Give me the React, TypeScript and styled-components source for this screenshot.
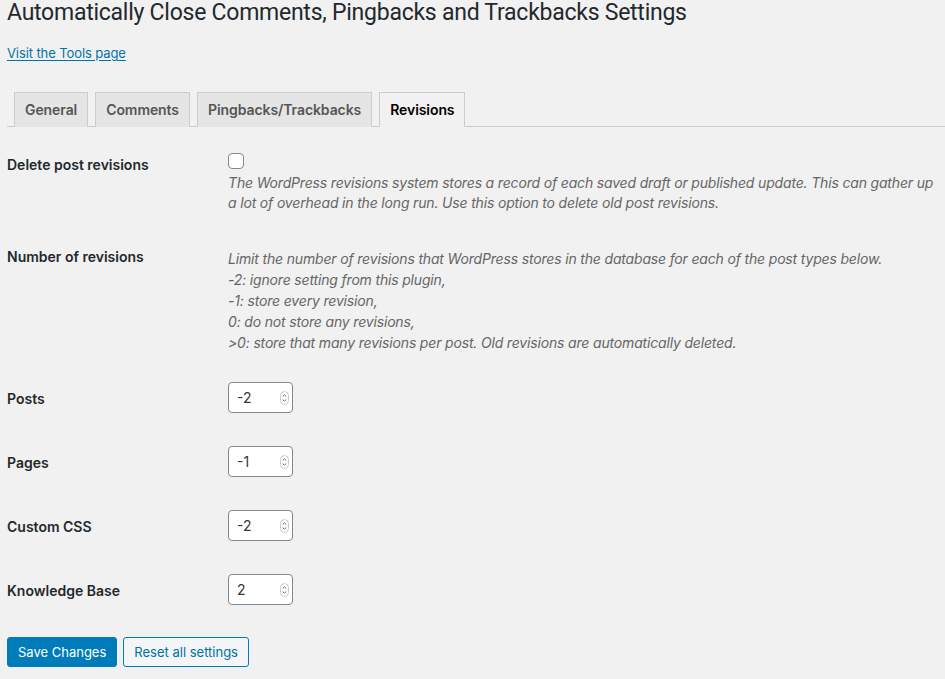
import React from "react";
import styled, { createGlobalStyle } from "styled-components";

const Global = createGlobalStyle`
  html, body { margin: 0; padding: 0; background: #f1f1f1; }
  body {
    font-family: Inter, "Noto Sans", "Liberation Sans", sans-serif;
    color: #23282d;
    font-size: 13px;
  }
`;

const Wrap = styled.div`
  padding: 0 0 0 7px;
`;

const Title = styled.h1`
  margin: 0;
  font-family: Roboto, Inter, "Liberation Sans", sans-serif;
  font-size: 23px;
  font-weight: 400;
  line-height: 25px;
  letter-spacing: -0.25px;
  color: #23282d;
`;

const ToolsLink = styled.a`
  display: inline-block;
  margin-top: 19px;
  font-size: 13px;
  line-height: 18px;
  color: #0073aa;
  text-decoration: underline;
  text-underline-offset: 2px;
  letter-spacing: -0.1px;
`;

const TabBar = styled.nav`
  display: flex;
  margin-top: 30px;
  border-bottom: 1px solid #ccc;
  height: 35px;
  box-sizing: border-box;
`;

const Tab = styled.a<{ $active?: boolean }>`
  display: block;
  margin-left: 7px;
  padding: 5px 10px;
  height: 35px;
  box-sizing: border-box;
  border: 1px solid #ccc;
  border-bottom: ${(p) => (p.$active ? "1px solid #f1f1f1" : "none")};
  background: ${(p) => (p.$active ? "#f1f1f1" : "#e5e5e5")};
  color: ${(p) => (p.$active ? "#000" : "#555")};
  font-size: 14px;
  font-weight: 600;
  line-height: 24px;
  letter-spacing: -0.08px;
  text-decoration: none;
  white-space: nowrap;
`;

const Form = styled.div`
  margin-top: 9px;
`;

const Row = styled.div<{ $center?: boolean }>`
  display: grid;
  grid-template-columns: 221px 1fr;
  align-items: ${(p) => (p.$center ? "center" : "start")};
`;

const Label = styled.div<{ $tight?: boolean }>`
  padding: ${(p) => (p.$tight ? "0 0 3px" : "20px 0")};
  font-size: 14px;
  font-weight: 600;
  line-height: 18px;
  color: #23282d;
`;

const Field = styled.div<{ $pad: string }>`
  padding: ${(p) => p.$pad};
  padding-right: 10px;
`;

const Checkbox = styled.span`
  display: block;
  width: 16px;
  height: 16px;
  box-sizing: border-box;
  margin-top: 2px;
  border: 1px solid #7e8993;
  border-radius: 4px;
  background: #fff;
`;

const Desc = styled.p<{ $lh: number; $mt: number }>`
  margin: ${(p) => p.$mt}px 0 0;
  font-size: 14px;
  font-style: italic;
  line-height: ${(p) => p.$lh}px;
  letter-spacing: -0.17px;
  color: #666;
`;

const NumberBox = styled.div`
  display: flex;
  align-items: center;
  width: 65px;
  height: 31px;
  box-sizing: border-box;
  border: 1px solid #7e8993;
  border-radius: 4px;
  background: #fff;
  padding: 0 3px 0 8px;
`;

const NumberValue = styled.input`
  flex: 1;
  min-width: 0;
  border: none;
  outline: none;
  background: transparent;
  padding: 0;
  font-family: inherit;
  font-size: 14px;
  color: #32373c;
`;

const Spinner = () => (
  <svg width="9" height="14" viewBox="0 0 9 14">
    <rect x="0.5" y="0.5" width="8" height="13" rx="4" fill="#fff" stroke="#c8c8c8" />
    <path d="M2.8 5.4 L4.5 3.8 L6.2 5.4" fill="none" stroke="#555" strokeWidth="0.9" />
    <path d="M2.8 8.6 L4.5 10.2 L6.2 8.6" fill="none" stroke="#555" strokeWidth="0.9" />
  </svg>
);

const Actions = styled.div`
  display: flex;
  gap: 6px;
  margin-top: 13px;
`;

const Button = styled.button<{ $primary?: boolean }>`
  height: 30px;
  padding: 0 10px;
  box-sizing: border-box;
  border: 1px solid #007cba;
  border-radius: 3px;
  background: ${(p) => (p.$primary ? "#007cba" : "#f3f5f6")};
  color: ${(p) => (p.$primary ? "#fff" : "#0071a1")};
  font-family: inherit;
  font-size: 13px;
  line-height: 28px;
  cursor: pointer;
`;

const numberRows = [
  { label: "Posts", value: "-2" },
  { label: "Pages", value: "-1" },
  { label: "Custom CSS", value: "-2" },
  { label: "Knowledge Base", value: "2" },
];

export default function App() {
  return (
    <>
      <Global />
      <Wrap>
        <Title>Automatically Close Comments, Pingbacks and Trackbacks Settings</Title>
        <ToolsLink href="#">Visit the Tools page</ToolsLink>
        <TabBar>
          <Tab href="#">General</Tab>
          <Tab href="#">Comments</Tab>
          <Tab href="#">Pingbacks/Trackbacks</Tab>
          <Tab href="#" $active>Revisions</Tab>
        </TabBar>
        <Form>
          <Row>
            <Label>Delete post revisions</Label>
            <Field $pad="15px 0">
              <Checkbox />
              <Desc $lh={20} $mt={4}>
                The WordPress revisions system stores a record of each saved draft or published update. This can gather up a lot of overhead in the long run. Use this option to delete old post revisions.
              </Desc>
            </Field>
          </Row>
          <Row>
            <Label>Number of revisions</Label>
            <Field $pad="20px 0 15px">
              <Desc $lh={21} $mt={0}>
                Limit the number of revisions that WordPress stores in the database for each of the post types below.
                <br />-2: ignore setting from this plugin,
                <br />-1: store every revision,
                <br />0: do not store any revisions,
                <br />&gt;0: store that many revisions per post. Old revisions are automatically deleted.
              </Desc>
            </Field>
          </Row>
          {numberRows.map((r) => (
            <Row key={r.label} $center>
              <Label $tight>{r.label}</Label>
              <Field $pad="14px 0 19px">
                <NumberBox>
                  <NumberValue type="text" defaultValue={r.value} />
                  <Spinner />
                </NumberBox>
              </Field>
            </Row>
          ))}
        </Form>
        <Actions>
          <Button $primary>Save Changes</Button>
          <Button>Reset all settings</Button>
        </Actions>
      </Wrap>
    </>
  );
}
